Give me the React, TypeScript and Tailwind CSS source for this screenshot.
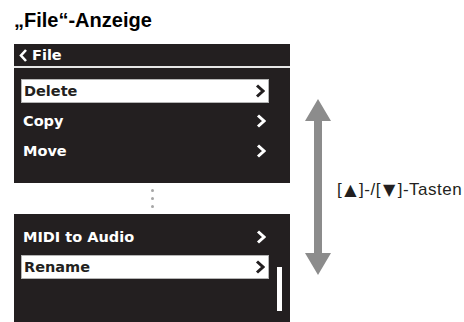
import React from "react";

type Item = { label: string; selected?: boolean };

const topItems: Item[] = [
  { label: "Delete", selected: true },
  { label: "Copy" },
  { label: "Move" },
];

const bottomItems: Item[] = [
  { label: "MIDI to Audio" },
  { label: "Rename", selected: true },
];

function Chevron({ dark }: { dark?: boolean }) {
  return (
    <svg width="10" height="14" viewBox="0 0 10 14">
      <polyline
        points="2,1.5 8,7 2,12.5"
        fill="none"
        stroke={dark ? "#231f20" : "#ffffff"}
        strokeWidth="3"
      />
    </svg>
  );
}

function Row({ item }: { item: Item }) {
  return (
    <div className="h-[30px] flex items-center pl-[7px] pr-[21px]">
      <div
        className={`flex-1 h-[24px] flex items-center justify-between pl-[2px] pr-[3px] ${
          item.selected ? "bg-white border border-[#b5b5b5] text-[#231f20]" : "text-white"
        }`}
      >
        <span className="font-['DejaVu_Sans'] font-bold text-[14.5px] leading-none">
          {item.label}
        </span>
        <Chevron dark={item.selected} />
      </div>
    </div>
  );
}

export default function App() {
  return (
    <div className="w-[464px] h-[322px] bg-white overflow-hidden font-['Liberation_Sans',sans-serif]">
      <h1 className="pl-[14px] pt-[9px] text-[20px] leading-[22px] font-bold text-black">
        „File“-Anzeige
      </h1>

      <div className="flex mt-[13px]">
        {/* Display screens */}
        <div className="w-[276px] ml-[14px] flex flex-col">
          <div className="h-[139px] bg-[#231f20]">
            <div className="h-[22px] flex items-center pl-[5px] gap-[4px] text-white">
              <svg width="9" height="13" viewBox="0 0 9 13">
                <polyline
                  points="7,1 2,6.5 7,12"
                  fill="none"
                  stroke="#ffffff"
                  strokeWidth="2.6"
                />
              </svg>
              <span className="font-['DejaVu_Sans'] font-bold text-[14.5px] leading-none">
                File
              </span>
            </div>
            <div className="h-[2px] bg-[#e6e6e6]" />
            <div className="pt-[8px]">
              {topItems.map((item) => (
                <Row key={item.label} item={item} />
              ))}
            </div>
          </div>

          <div className="h-[31px] flex flex-col items-center justify-center gap-[5px]">
            <div className="w-[3px] h-[3px] rounded-full bg-[#a6a6a6]" />
            <div className="w-[3px] h-[3px] rounded-full bg-[#a6a6a6]" />
            <div className="w-[3px] h-[3px] rounded-full bg-[#a6a6a6]" />
          </div>

          <div className="h-[108px] bg-[#231f20] pt-[8px] relative">
            {bottomItems.map((item) => (
              <Row key={item.label} item={item} />
            ))}
            {/* scroll bar */}
            <div className="absolute left-[263px] top-[53px] w-[5px] h-[44px] bg-white" />
          </div>
        </div>

        {/* Up/down keys hint */}
        <div className="flex items-center ml-[14px] mt-[55px] h-[176px]">
          <svg width="28" height="176" viewBox="0 0 28 176">
            <polygon
              points="14,0 27,22 18,22 18,154 27,154 14,176 1,154 10,154 10,22 1,22"
              fill="#8c8c8c"
            />
          </svg>
          <span className="ml-[5px] mt-[6px] text-[17px] tracking-[0.5px] text-[#231f20] whitespace-nowrap">
            [<span className="font-['DejaVu_Sans'] text-[16px] mx-[2px]">▲</span>]-/[
            <span className="font-['DejaVu_Sans'] text-[16px] mx-[2px]">▼</span>]-Tasten
          </span>
        </div>
      </div>
    </div>
  );
}
